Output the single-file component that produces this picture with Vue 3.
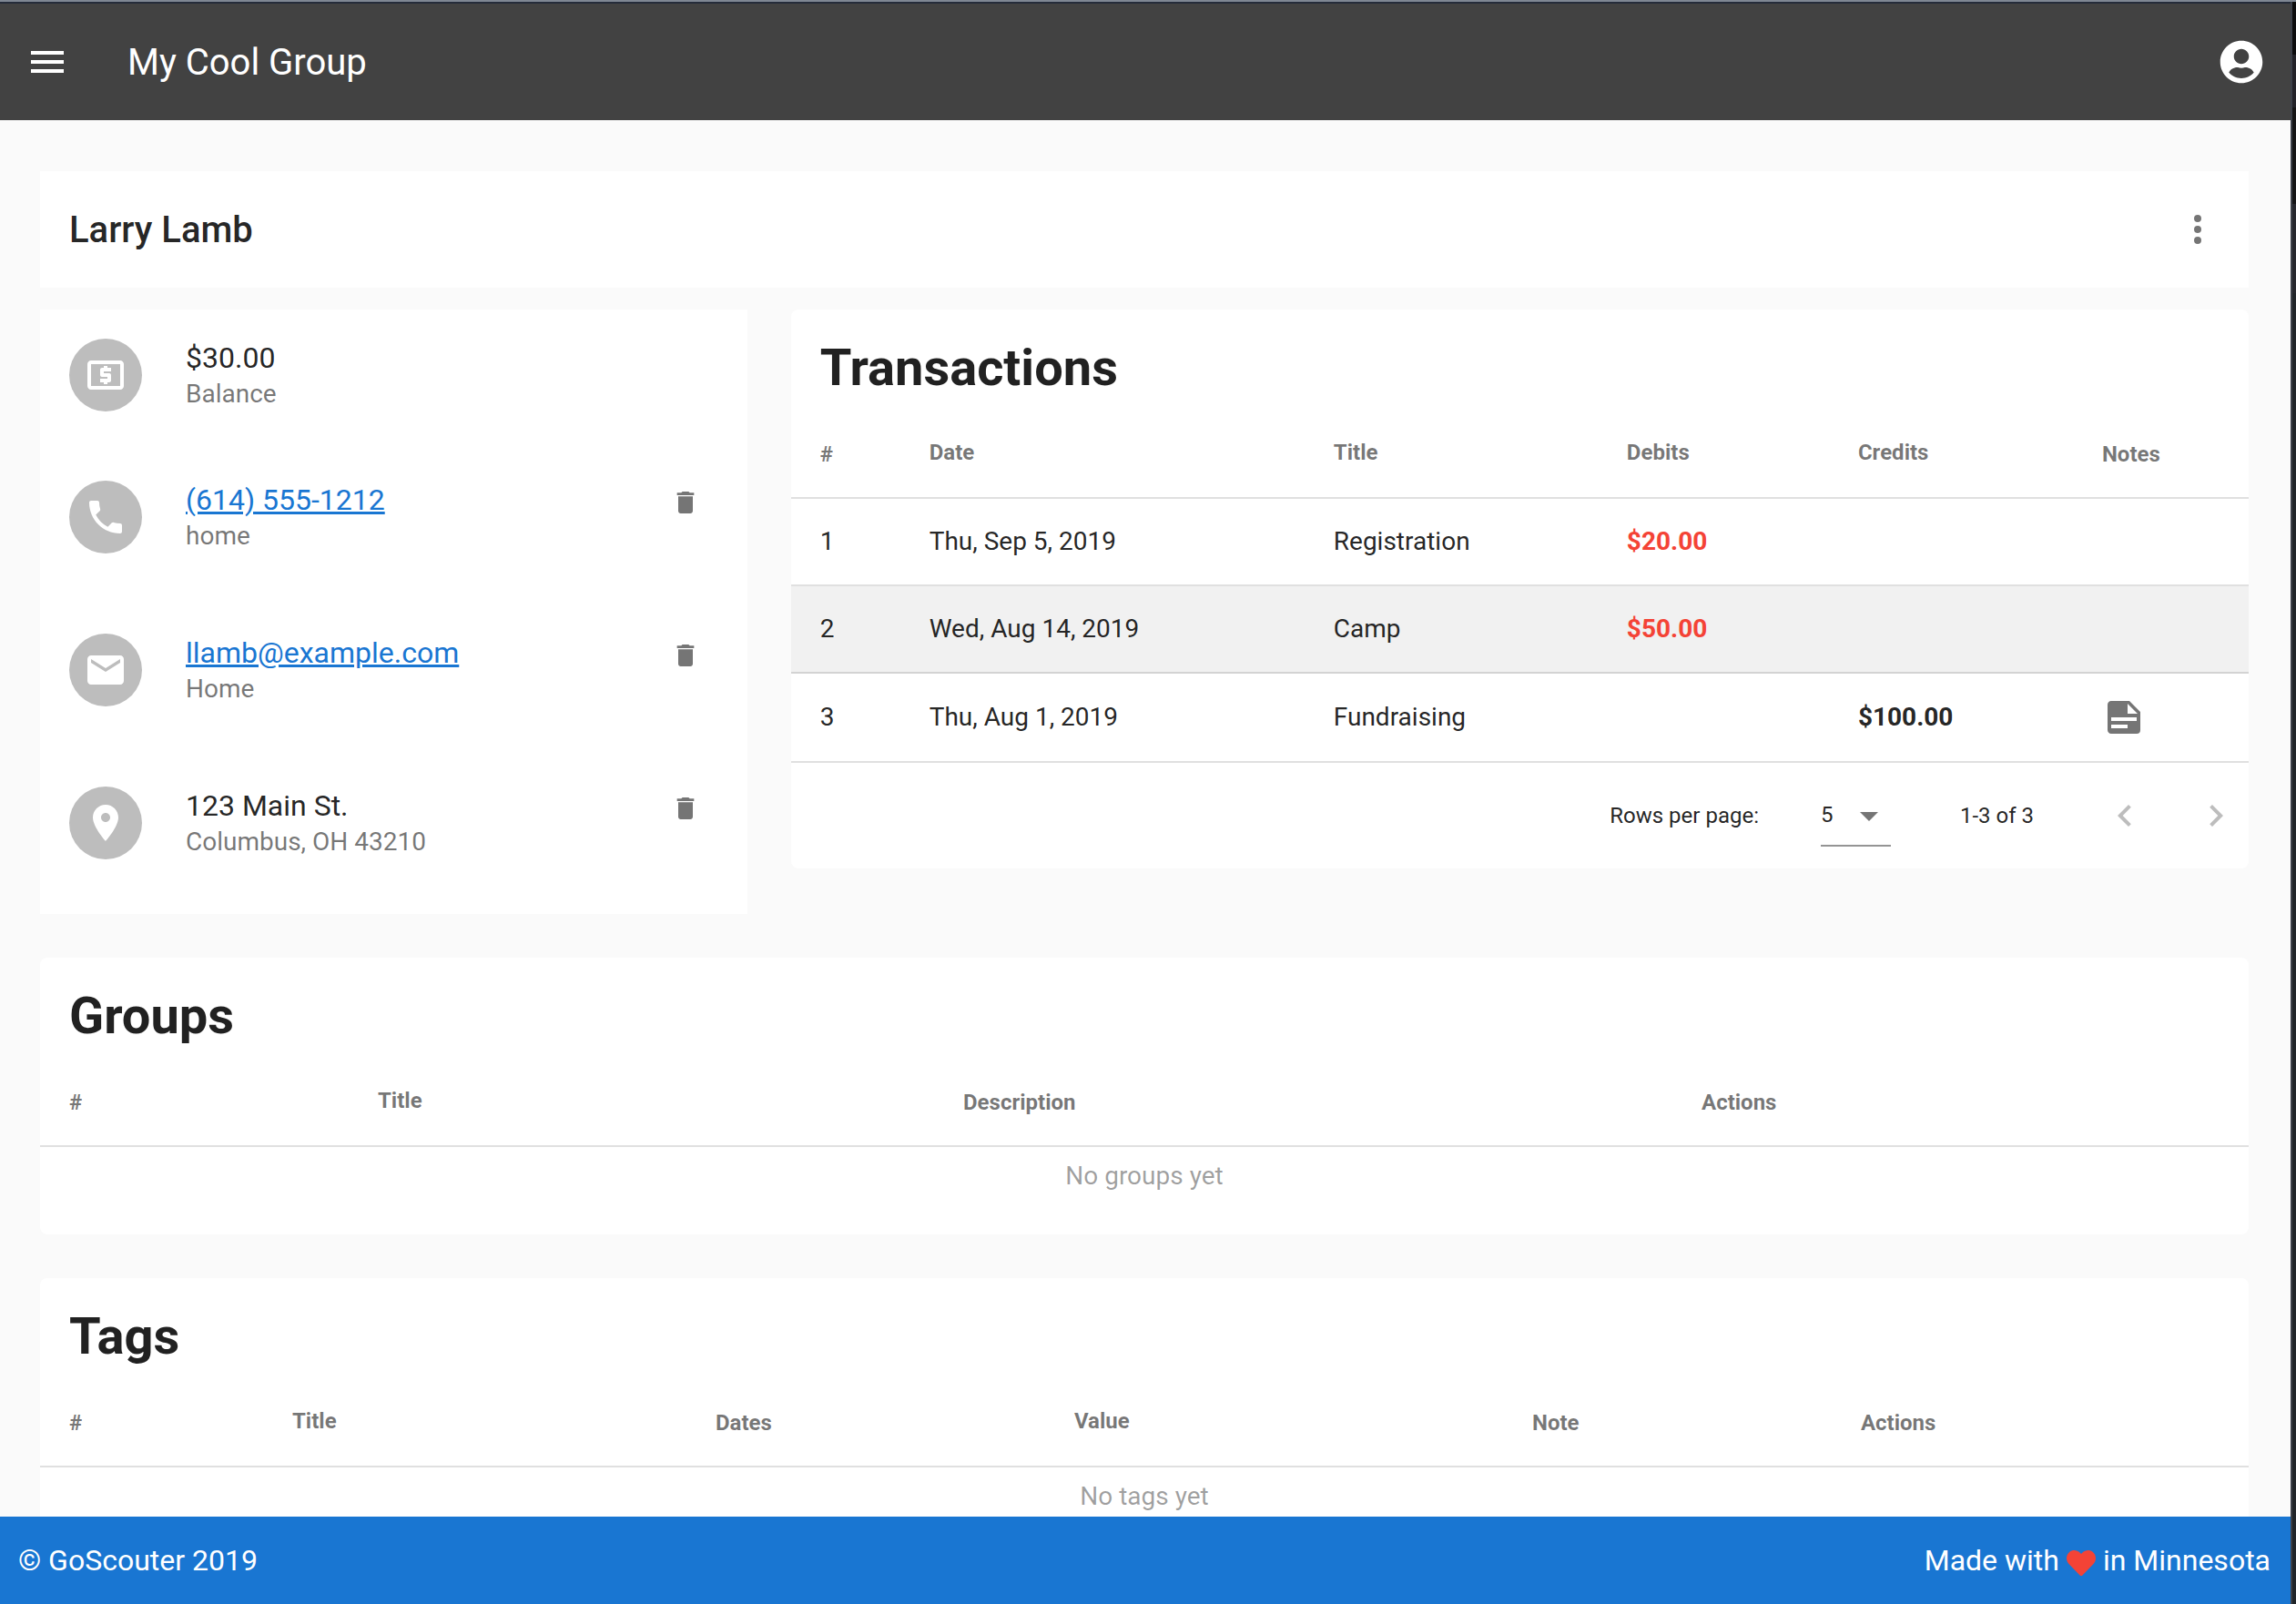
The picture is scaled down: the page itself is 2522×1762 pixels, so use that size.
<script setup>
import { ref } from 'vue'

const icons = {
  menu: 'M3 6h18v2H3zM3 11h18v2H3zM3 16h18v2H3z',
  dots: 'M12 8a2 2 0 1 0 0-4 2 2 0 0 0 0 4zm0 2a2 2 0 1 0 0 4 2 2 0 0 0 0-4zm0 6a2 2 0 1 0 0 4 2 2 0 0 0 0-4z',
  cash: 'M11 17h2v-1h1c.55 0 1-.45 1-1v-3c0-.55-.45-1-1-1h-3v-1h4V8h-2V7h-2v1h-1c-.55 0-1 .45-1 1v3c0 .55.45 1 1 1h3v1H9v2h2v1zm9-13H4c-1.11 0-1.99.89-1.99 2L2 18c0 1.11.89 2 2 2h16c1.11 0 2-.89 2-2V6c0-1.11-.89-2-2-2zm0 14H4V6h16v12z',
  phone: 'M6.62 10.79c1.44 2.83 3.76 5.14 6.59 6.59l2.2-2.2c.27-.27.67-.36 1.02-.24 1.12.37 2.33.57 3.57.57.55 0 1 .45 1 1V20c0 .55-.45 1-1 1-9.39 0-17-7.61-17-17 0-.55.45-1 1-1h3.5c.55 0 1 .45 1 1 0 1.25.2 2.45.57 3.57.11.35.03.74-.25 1.02l-2.2 2.2z',
  mail: 'M20 4H4c-1.1 0-1.99.9-1.99 2L2 18c0 1.1.9 2 2 2h16c1.1 0 2-.9 2-2V6c0-1.1-.9-2-2-2zm0 4l-8 5-8-5V6l8 5 8-5v2z',
  place: 'M12 2C8.13 2 5 5.13 5 9c0 5.25 7 13 7 13s7-7.75 7-13c0-3.87-3.13-7-7-7zm0 9.5c-1.38 0-2.5-1.12-2.5-2.5s1.12-2.5 2.5-2.5 2.5 1.12 2.5 2.5-1.12 2.5-2.5 2.5z',
  trash: 'M6 19c0 1.1.9 2 2 2h8c1.1 0 2-.9 2-2V7H6v12zM19 4h-3.5l-1-1h-5l-1 1H5v2h14V4z',
  note: 'M14 10h5.5L14 4.5V10M5 3h10l6 6v10a2 2 0 0 1-2 2H5c-1.11 0-2-.9-2-2V5c0-1.11.89-2 2-2m0 9v2h14v-2H5m0 4v2h9v-2H5z',
  caret: 'M7 10l5 5 5-5z',
  prev: 'M15.41 7.41L14 6l-6 6 6 6 1.41-1.41L10.83 12z',
  next: 'M10 6L8.59 7.41 13.17 12l-4.58 4.59L10 18l6-6z'
}

const contacts = [
  { icon: 'cash', title: '$30.00', subtitle: 'Balance' },
  { icon: 'phone', title: '(614) 555-1212', subtitle: 'home', href: 'tel:6145551212', removable: true },
  { icon: 'mail', title: 'llamb@example.com', subtitle: 'Home', href: 'mailto:llamb@example.com', removable: true },
  { icon: 'place', title: '123 Main St.', subtitle: 'Columbus, OH 43210', removable: true }
]

const transactionColumns = [
  { label: '#', weight: 152 },
  { label: 'Date', weight: 444, sortable: true },
  { label: 'Title', weight: 322, sortable: true },
  { label: 'Debits', weight: 254, sortable: true },
  { label: 'Credits', weight: 268, sortable: true },
  { label: 'Notes', weight: 161 }
]

const transactions = [
  { id: 1, date: 'Thu, Sep 5, 2019', title: 'Registration', debit: '$20.00' },
  { id: 2, date: 'Wed, Aug 14, 2019', title: 'Camp', debit: '$50.00', active: true },
  { id: 3, date: 'Thu, Aug 1, 2019', title: 'Fundraising', credit: '$100.00', note: true }
]

const listings = [
  {
    title: 'Groups',
    empty: 'No groups yet',
    columns: [
      { label: '#', weight: 371 },
      { label: 'Title', weight: 643, sortable: true },
      { label: 'Description', weight: 811 },
      { label: 'Actions', weight: 601 }
    ]
  },
  {
    title: 'Tags',
    empty: 'No tags yet',
    columns: [
      { label: '#', weight: 277 },
      { label: 'Title', weight: 465, sortable: true },
      { label: 'Dates', weight: 394 },
      { label: 'Value', weight: 503, sortable: true },
      { label: 'Note', weight: 361 },
      { label: 'Actions', weight: 426 }
    ]
  }
]

const perPage = ref('5')

function share(columns, column) {
  const total = columns.reduce((sum, c) => sum + c.weight, 0)
  return { width: `${(column.weight / total) * 100}%` }
}
</script>

<template>
  <div class="window">
    <div class="app">
      <header class="toolbar">
        <button class="icon-button" type="button" aria-label="Menu">
          <svg class="icon" viewBox="0 0 24 24"><path :d="icons.menu" /></svg>
        </button>
        <span class="toolbar-title">My Cool Group</span>
        <button class="icon-button account" type="button" aria-label="Account">
          <svg class="icon" viewBox="-8 0 512 512">
            <path d="M248 8C111 8 0 119 0 256s111 248 248 248 248-111 248-248S385 8 248 8zm0 96c48.6 0 88 39.4 88 88s-39.4 88-88 88-88-39.4-88-88 39.4-88 88-88zm0 344c-58.7 0-111.3-26.6-146.5-68.2 18.8-35.4 55.6-59.8 98.5-59.8 2.4 0 4.8.4 7.1 1.1 13 4.2 26.6 6.9 40.9 6.9 14.3 0 28-2.7 40.9-6.9 2.3-.7 4.7-1.1 7.1-1.1 42.9 0 79.7 24.4 98.5 59.8C359.3 421.4 306.7 448 248 448z" />
          </svg>
        </button>
      </header>

      <main class="content">
        <section class="person">
          <h1>Larry Lamb</h1>
          <button class="icon-button muted" type="button" aria-label="More options">
            <svg class="icon" viewBox="0 0 24 24"><path :d="icons.dots" /></svg>
          </button>
        </section>

        <div class="columns">
          <ul class="contacts">
            <li v-for="contact in contacts" :key="contact.title" class="contact" :class="{ spaced: contact.removable }">
              <span class="avatar">
                <svg class="icon" viewBox="0 0 24 24"><path fill-rule="evenodd" :d="icons[contact.icon]" /></svg>
              </span>
              <div class="contact-text">
                <a v-if="contact.href" class="contact-title" :href="contact.href">{{ contact.title }}</a>
                <span v-else class="contact-title">{{ contact.title }}</span>
                <span class="contact-subtitle">{{ contact.subtitle }}</span>
              </div>
              <button v-if="contact.removable" class="icon-button remove muted" type="button" :aria-label="`Delete ${contact.title}`">
                <svg class="icon small" viewBox="0 0 24 24"><path :d="icons.trash" /></svg>
              </button>
            </li>
          </ul>

          <section class="card transactions">
            <h2>Transactions</h2>
            <table>
              <colgroup>
                <col v-for="column in transactionColumns" :key="column.label" :style="share(transactionColumns, column)" />
              </colgroup>
              <thead>
                <tr>
                  <th v-for="column in transactionColumns" :key="column.label" scope="col" :class="{ sortable: column.sortable }">{{ column.label }}</th>
                </tr>
              </thead>
              <tbody>
                <tr v-for="row in transactions" :key="row.id" :class="{ active: row.active }">
                  <td>{{ row.id }}</td>
                  <td>{{ row.date }}</td>
                  <td>{{ row.title }}</td>
                  <td class="amount debit">{{ row.debit }}</td>
                  <td class="amount">{{ row.credit }}</td>
                  <td>
                    <button v-if="row.note" class="icon-button muted" type="button" aria-label="Show note">
                      <svg class="icon" viewBox="0 0 24 24"><path fill-rule="evenodd" :d="icons.note" /></svg>
                    </button>
                  </td>
                </tr>
              </tbody>
            </table>
            <div class="pagination">
              <label for="per-page">Rows per page:</label>
              <span class="select">
                <select id="per-page" v-model="perPage">
                  <option>5</option>
                  <option>10</option>
                  <option>25</option>
                </select>
                <svg class="icon caret" viewBox="0 0 24 24"><path :d="icons.caret" /></svg>
              </span>
              <span class="range">1-3 of 3</span>
              <button class="icon-button page" type="button" disabled aria-label="Previous page">
                <svg class="icon" viewBox="0 0 24 24"><path :d="icons.prev" /></svg>
              </button>
              <button class="icon-button page" type="button" disabled aria-label="Next page">
                <svg class="icon" viewBox="0 0 24 24"><path :d="icons.next" /></svg>
              </button>
            </div>
          </section>
        </div>

        <section v-for="listing in listings" :key="listing.title" class="card listing">
          <h2>{{ listing.title }}</h2>
          <table>
            <colgroup>
              <col v-for="column in listing.columns" :key="column.label" :style="share(listing.columns, column)" />
            </colgroup>
            <thead>
              <tr>
                <th v-for="column in listing.columns" :key="column.label" scope="col" :class="{ sortable: column.sortable }">{{ column.label }}</th>
              </tr>
            </thead>
            <tbody>
              <tr>
                <td class="empty" :colspan="listing.columns.length">{{ listing.empty }}</td>
              </tr>
            </tbody>
          </table>
        </section>
      </main>

      <footer class="footer">
        <span>© GoScouter 2019</span>
        <span class="made">
          Made with
          <svg class="heart" viewBox="0 0 512 512"><path d="M462.3 62.6C407.5 15.9 326 24.3 275.7 76.2L256 96.5l-19.7-20.3C186.1 24.3 104.5 15.9 49.7 62.6c-62.8 53.6-66.1 149.8-9.9 207.9l193.5 199.8c12.5 12.9 32.8 12.9 45.3 0l193.5-199.8c56.3-58.1 53-154.3-9.8-207.9z" /></svg>
          in Minnesota
        </span>
      </footer>
    </div>
    <div class="edge"></div>
  </div>
</template>

<style>
body {
  background: #fafafa;
}
</style>

<style scoped>
.window {
  display: flex;
  height: 100vh;
  box-sizing: border-box;
  border-top: 2px solid #7f8793;
  font-family: Roboto, sans-serif;
  color: rgba(0, 0, 0, 0.87);
}

.app {
  flex: 1;
  min-width: 0;
  display: flex;
  flex-direction: column;
  border-top: 2px solid #252c3a;
  background: #fafafa;
}

.edge {
  width: 4px;
  border-left: 2px solid #3c4048;
  background: linear-gradient(#0c0c0d 58px, #222228 58px 116px, #151516 116px 222px, #26272d 222px 320px, #212529 320px);
}

.icon {
  display: block;
  width: 48px;
  height: 48px;
  fill: currentColor;
}

.icon.small {
  width: 32px;
  height: 32px;
}

.icon-button {
  display: flex;
  align-items: center;
  justify-content: center;
  flex: none;
  padding: 0;
  border: 0;
  background: none;
  color: inherit;
  cursor: pointer;
}

.muted {
  color: #757575;
}

.toolbar {
  flex: none;
  display: flex;
  align-items: center;
  height: 128px;
  padding: 0 30px 0 28px;
  background: #424242;
  color: #fff;
}

.toolbar-title,
h1 {
  margin: 0;
  padding-top: 2px;
  font-size: 40px;
  line-height: 48px;
}

.toolbar-title {
  margin-left: 64px;
}

.account {
  margin-left: auto;
}

.content {
  flex: 1;
  min-height: 0;
  overflow: hidden;
  padding: 56px 46px 0 44px;
}

.person {
  display: flex;
  align-items: center;
  justify-content: space-between;
  height: 128px;
  padding: 0 32px;
  background: #fff;
}

h1 {
  font-weight: 500;
}

.columns {
  display: grid;
  grid-template-columns: repeat(12, minmax(0, 1fr));
  column-gap: 48px;
  align-items: start;
  margin-top: 24px;
}

.contacts {
  grid-column: span 4;
  margin: 0;
  padding: 0 0 16px;
  list-style: none;
  background: #fff;
}

.contact {
  display: flex;
  align-items: center;
  height: 144px;
  padding: 0 32px;
}

.contact.spaced {
  height: 168px;
}

.avatar {
  display: flex;
  align-items: center;
  justify-content: center;
  width: 80px;
  height: 80px;
  margin-right: 48px;
  border-radius: 50%;
  background: #bdbdbd;
  color: #fff;
}

.contact-text {
  flex: 1;
  display: flex;
  flex-direction: column;
  align-items: flex-start;
}

.contact-title {
  font-size: 32px;
  line-height: 42px;
}

a.contact-title {
  color: #1976d2;
}

.contact-subtitle {
  font-size: 28px;
  line-height: 38px;
  color: rgba(0, 0, 0, 0.54);
}

.remove {
  width: 72px;
  height: 72px;
  margin-bottom: 32px;
}

.card {
  overflow: hidden;
  border-radius: 8px;
  background: #fff;
}

.transactions {
  grid-column: span 8;
}

h2 {
  margin: 0;
  padding: 32px 32px 16px;
  font-size: 56px;
  line-height: 64px;
  font-weight: 700;
}

table {
  width: 100%;
  table-layout: fixed;
  border-collapse: separate;
  border-spacing: 0;
}

th,
td {
  box-sizing: border-box;
  height: 96px;
  padding: 0;
  border-bottom: 2px solid rgba(0, 0, 0, 0.12);
  text-align: left;
  vertical-align: middle;
  font-size: 28px;
  line-height: 32px;
}

th:first-child,
td:first-child {
  padding-left: 32px;
}

tbody tr:last-child td {
  border-bottom: 0;
}

th {
  font-size: 24px;
  font-weight: 700;
  color: rgba(0, 0, 0, 0.54);
}

th.sortable {
  padding-bottom: 4px;
}

.active td {
  background: #f1f1f1;
}

.amount {
  font-weight: 700;
}

.debit {
  color: #f44336;
}

.pagination {
  display: flex;
  align-items: center;
  justify-content: flex-end;
  height: 116px;
  border-top: 2px solid rgba(0, 0, 0, 0.12);
  font-size: 24px;
  line-height: 32px;
}

.select {
  position: relative;
  width: 77px;
  margin: 0 76px 0 68px;
}

.select select {
  display: block;
  width: 100%;
  height: 68px;
  padding: 0;
  border: 0;
  border-bottom: 2px solid #949494;
  border-radius: 0;
  appearance: none;
  background: none;
  color: inherit;
  font: inherit;
}

.caret {
  position: absolute;
  top: 10px;
  right: 0;
  color: #757575;
  pointer-events: none;
}

.range {
  margin-right: 36px;
}

.page {
  width: 72px;
  height: 72px;
  margin-left: 28px;
  color: #bdbdbd;
}

.listing {
  margin-top: 48px;
  padding-bottom: 32px;
}

td.empty {
  height: 64px;
  padding: 0;
  text-align: center;
  color: rgba(0, 0, 0, 0.38);
}

.footer {
  flex: none;
  display: flex;
  align-items: center;
  justify-content: space-between;
  height: 96px;
  padding: 0 22px 0 20px;
  background: #1976d2;
  color: #fff;
  font-size: 32px;
  line-height: 48px;
}

.made {
  display: flex;
  align-items: center;
  gap: 8px;
}

.heart {
  width: 32px;
  height: 32px;
  margin-top: 6px;
  fill: #f44336;
}
</style>
